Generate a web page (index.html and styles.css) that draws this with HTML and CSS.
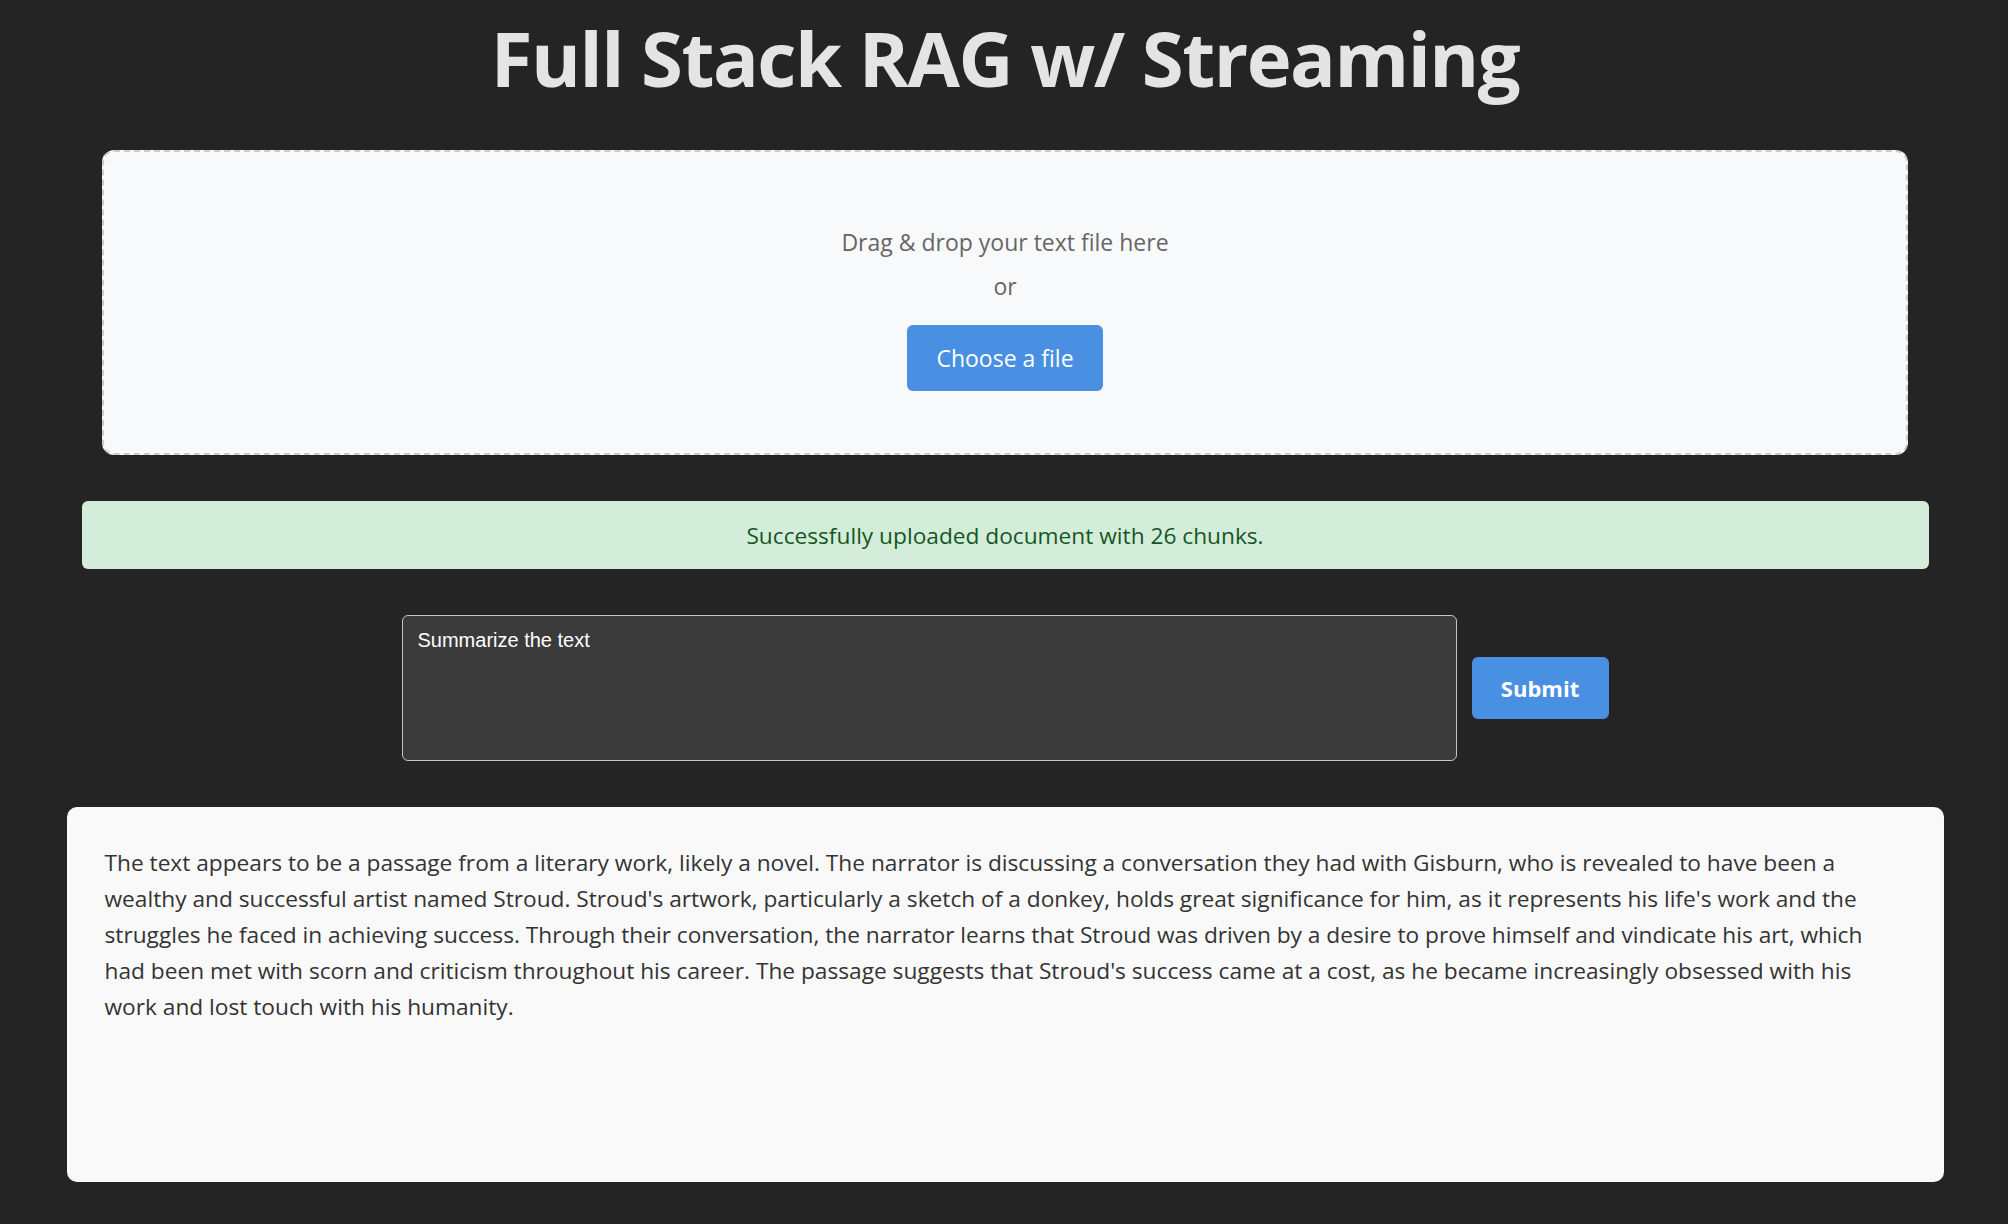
FILE: index.html
```html
<!DOCTYPE html>
<html lang="en">
<head>
<meta charset="utf-8">
<title>Full Stack RAG w/ Streaming</title>
<link rel="stylesheet" href="styles.css">
</head>
<body>
<main class="app">
  <h1 class="title">Full Stack RAG w/ Streaming</h1>

  <section class="dropzone">
    <p class="drop-text">Drag &amp; drop your text file here</p>
    <p class="drop-or">or</p>
    <button class="btn btn-file" type="button">Choose a file</button>
  </section>

  <div class="alert">Successfully uploaded document with 26 chunks.</div>

  <form class="prompt">
    <textarea class="prompt-input">Summarize the text</textarea>
    <button class="btn btn-submit" type="button">Submit</button>
  </form>

  <section class="response">
    <p class="response-text">The text appears to be a passage from a literary work, likely a novel. The narrator is discussing a conversation they had with Gisburn, who is revealed to have been a wealthy and successful artist named Stroud. Stroud's artwork, particularly a sketch of a donkey, holds great significance for him, as it represents his life's work and the struggles he faced in achieving success. Through their conversation, the narrator learns that Stroud was driven by a desire to prove himself and vindicate his art, which had been met with scorn and criticism throughout his career. The passage suggests that Stroud's success came at a cost, as he became increasingly obsessed with his work and lost touch with his humanity.</p>
  </section>
</main>
</body>
</html>
```

FILE: styles.css
```css
* { box-sizing: border-box; }

html, body {
  margin: 0;
  padding: 0;
  background: #242424;
}

body {
  font-family: "Open Sans", "Noto Sans", sans-serif;
  color: rgba(255, 255, 255, 0.87);
  width: 2008px;
  height: 1224px;
  overflow: hidden;
}

.app {
  display: flex;
  flex-direction: column;
  align-items: center;
  padding-left: 2px;
}

.title {
  margin: 10px 0 0;
  font-size: 76px;
  line-height: 96px;
  font-weight: 700;
  letter-spacing: -1.5px;
  color: #e4e4e4;
}

.dropzone {
  margin-top: 44px;
  width: 1806px;
  height: 305px;
  background: #f8f9fa;
  border: 2px dashed #cccccc;
  border-radius: 12px;
  display: flex;
  flex-direction: column;
  align-items: center;
  padding-top: 75px;
}

.drop-text, .drop-or {
  margin: 0;
  font-size: 23px;
  line-height: 30px;
  color: #666666;
}

.drop-or { margin-top: 14px; }

.btn {
  border: none;
  background: #4a90e2;
  color: #ffffff;
  font-family: "Open Sans", "Noto Sans", sans-serif;
  border-radius: 6px;
  cursor: pointer;
  padding: 0;
}

.btn-file {
  margin-top: 24px;
  width: 196px;
  height: 66px;
  font-size: 23px;
}

.alert {
  margin-top: 46px;
  width: 1847px;
  height: 68px;
  background: #d4edda;
  color: #155724;
  border-radius: 6px;
  display: flex;
  align-items: center;
  justify-content: center;
  font-size: 22.7px;
}

.prompt {
  margin: 46px 0 0;
  display: flex;
  align-items: center;
  gap: 15px;
}

.prompt-input {
  width: 1055px;
  height: 146px;
  background: #3b3b3b;
  color: #ffffff;
  border: 1px solid #c4c4c4;
  border-radius: 6px;
  padding: 12px 15px;
  font-family: "Liberation Sans", Arial, sans-serif;
  font-size: 20px;
  line-height: 1.2;
  resize: none;
  outline: none;
}

.btn-submit {
  width: 137px;
  height: 62px;
  font-size: 22px;
  font-weight: 700;
}

.response {
  margin-top: 46px;
  width: 1877px;
  height: 375px;
  background: #f9f9f9;
  border-radius: 10px;
  padding: 38px 50px 38px 38px;
}

.response-text {
  margin: 0;
  font-size: 22.7px;
  line-height: 36px;
  color: #333333;
}
```
